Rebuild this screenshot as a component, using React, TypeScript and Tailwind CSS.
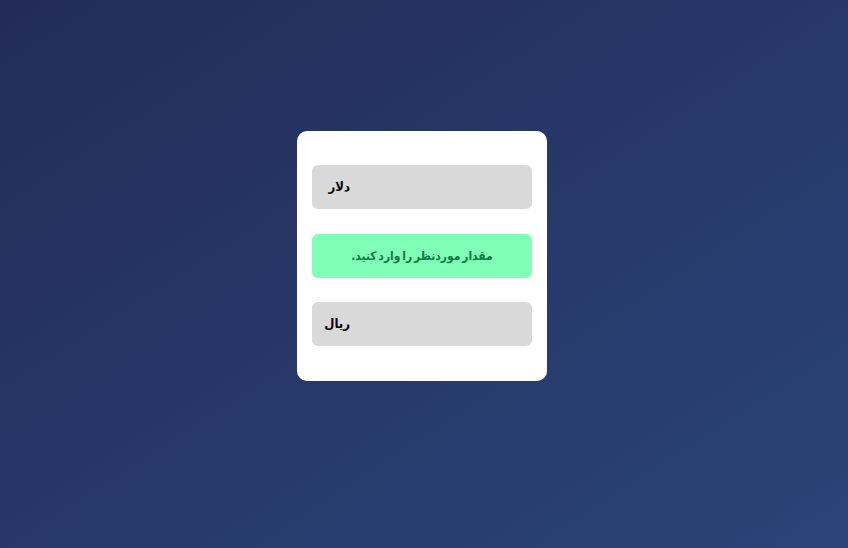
const Field = ({ label }: { label: string }) => (
	<div className="flex h-[44px] w-[220px] items-center rounded-md bg-[#d9d9d9]">
		<span dir="rtl" className="w-[38px] text-right text-[13px] font-bold text-black">
			{label}
		</span>
	</div>
);

const App = () => {
	return (
		<div
			className="flex h-[548px] w-full items-center justify-center bg-gradient-to-br from-[#232c58] to-[#2a4479] pb-[36px] pr-[4px]"
			style={{ fontFamily: '"DejaVu Sans Condensed", "DejaVu Sans", sans-serif' }}
		>
			<div className="flex w-[250px] flex-col items-center rounded-[10px] bg-white pb-[35px] pt-[34px]">
				<Field label="دلار" />
				<div
					dir="rtl"
					className="mt-[25px] flex h-[44px] w-[220px] items-center justify-center rounded-md bg-[#80ffb8] text-[12px] font-bold text-[#117a3f] [word-spacing:-2px]"
				>
					مقدار موردنظر را وارد کنید.
				</div>
				<div className="mt-[24px]">
					<Field label="ریال" />
				</div>
			</div>
		</div>
	);
};

export default App;
